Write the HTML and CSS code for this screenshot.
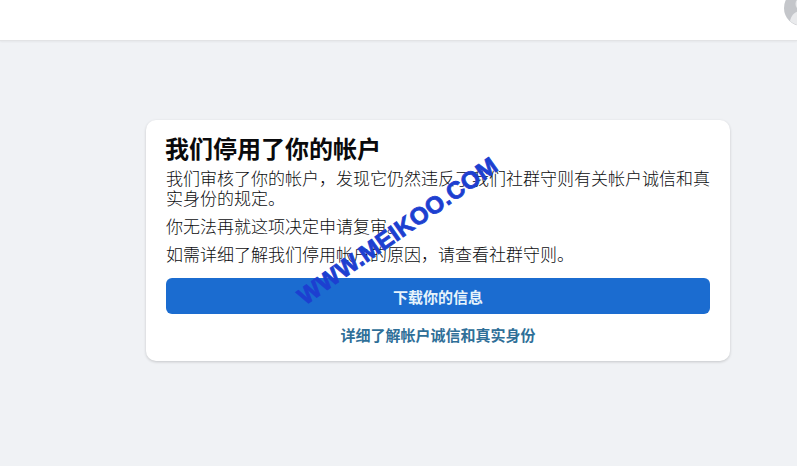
FILE: index.html
```html
<!DOCTYPE html>
<html lang="zh-CN">
<head>
<meta charset="UTF-8">
<meta name="viewport" content="width=device-width, initial-scale=1.0">
<title>我们停用了你的帐户</title>
<link rel="stylesheet" href="styles.css">
</head>
<body>
    <header class="topbar">
        <svg class="avatar" viewBox="0 0 36 36" width="36" height="36">
            <circle cx="18" cy="18" r="18" fill="#c4c6ca"/>
            <circle cx="18" cy="14" r="6.5" fill="#e9eaec"/>
            <path d="M6 31c2-8 7-10 12-10s10 2 12 10a18 18 0 0 1-24 0z" fill="#e9eaec"/>
        </svg>
    </header>
    <main class="main">
        <section class="card">
            <h1 class="card-title">我们停用了你的帐户</h1>
            <p class="intro">我们审核了你的帐户，发现它仍然违反了我们社群守则有关帐户诚信和真实身份的规定。</p>
            <p class="note">你无法再就这项决定申请复审。</p>
            <p class="note">如需详细了解我们停用帐户的原因，请查看社群守则。</p>
            <button class="download">下载你的信息</button>
            <a class="learn-more" href="#">详细了解帐户诚信和真实身份</a>
            <span class="watermark">WWW.MEIKOO.COM</span>
        </section>
    </main>
</body>
</html>
```

FILE: styles.css
```css
:root {
    --page-bg: #f0f2f5;
    --text-color: #0c0d0f;
    --btn-bg: #1b6cd0;
    --link-color: #2f6f98;
}
* {
    box-sizing: border-box;
}
html, body {
    height: 100%;
}
body {
    margin: 0;
    overflow: hidden;
    background-color: var(--page-bg);
    color: var(--text-color);
    font-family: "Liberation Sans", "Noto Sans CJK SC", sans-serif;
}
.topbar {
    display: flex;
    justify-content: flex-end;
    height: 41px;
    overflow: hidden;
    background: white;
    border-bottom: 1px solid #e2e3e5;
    box-shadow: 0 1px 2px rgba(0, 0, 0, 0.05);
}
.avatar {
    flex: none;
    margin: -10px -23px 0 0;
}
.main {
    padding: 79px 67px 0 146px;
}
.card {
    position: relative;
    display: flex;
    flex-direction: column;
    height: 241px;
    padding: 16px 20px 0;
    background: white;
    border-radius: 10px;
    box-shadow: 0 1px 3px rgba(0, 0, 0, 0.18);
}
.card-title {
    margin: 0 0 0 -1px;
    font-size: 24px;
    line-height: 28px;
    font-weight: 700;
    color: #0a0a0c;
}
.intro {
    margin: 0;
    padding-top: 6px;
    font-size: 17px;
    line-height: 20px;
    font-weight: 300;
}
.note {
    margin: 8px 0 0;
    font-size: 17px;
    line-height: 20px;
    font-weight: 300;
}
.download {
    height: 36px;
    margin-top: 12px;
    border: none;
    border-radius: 6px;
    background: var(--btn-bg);
    color: #e6f3fb;
    font-family: inherit;
    font-size: 15px;
    font-weight: 700;
}
.learn-more {
    margin-top: 12px;
    text-align: center;
    color: var(--link-color);
    font-size: 15px;
    line-height: 20px;
    font-weight: 700;
    text-decoration: none;
}
/* stamped across the card, sits over the text */
.watermark {
    position: absolute;
    left: 133px;
    top: 97px;
    color: #1d3fd0;
    font-family: "Liberation Sans", sans-serif;
    font-size: 24px;
    line-height: 28px;
    font-weight: 700;
    letter-spacing: 0.3px;
    -webkit-text-stroke: 0.8px #1d3fd0;
    white-space: nowrap;
    transform: rotate(-35deg);
}
```
